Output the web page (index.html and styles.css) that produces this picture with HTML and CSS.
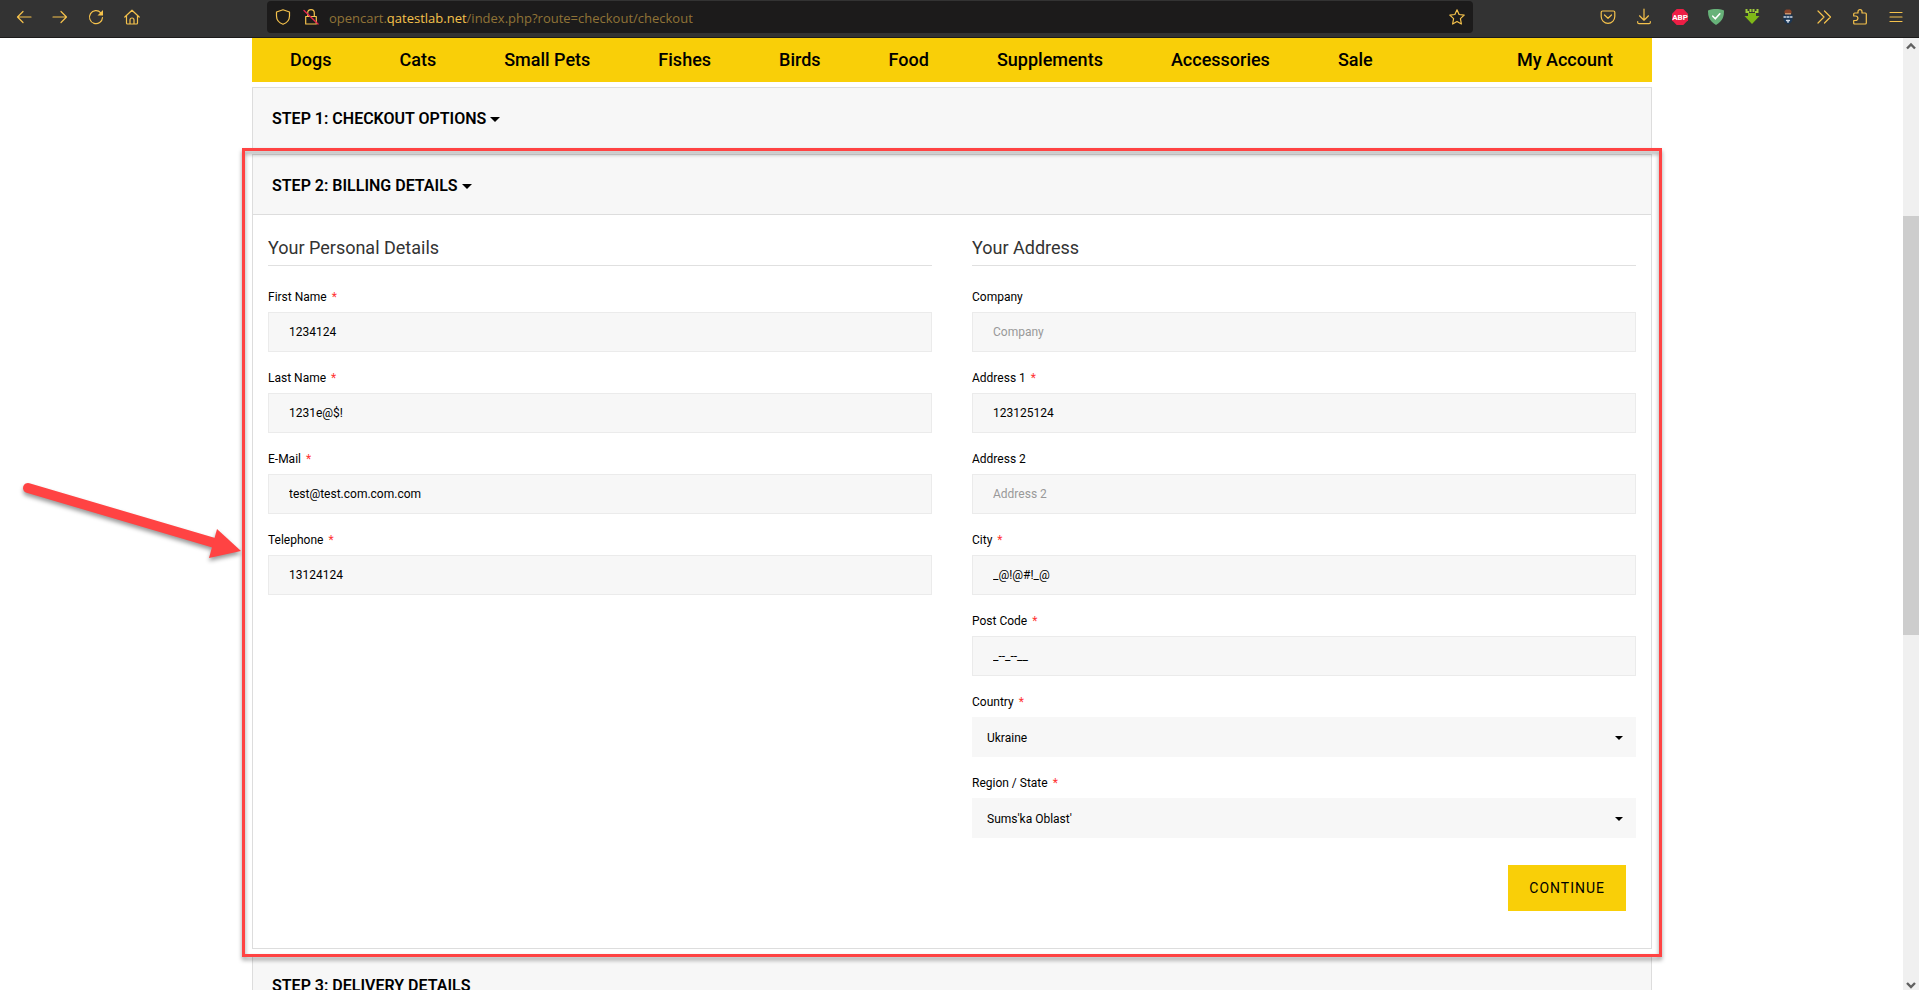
FILE: index.html
```html
<!DOCTYPE html>
<html lang="en">
<head>
<meta charset="utf-8">
<title>Checkout</title>
<link rel="stylesheet" href="styles.css">
</head>
<body>
<header class="toolbar">
  <div class="tools">
    <button class="tool" aria-label="Back"><svg class="icon" viewBox="0 0 16 16"><path d="M15 8H1.500M7 2.500 1.500 8 7 13.500"/></svg></button>
    <button class="tool" aria-label="Forward"><svg class="icon" viewBox="0 0 16 16"><path d="M1 8h13.500M9 2.500 14.500 8 9 13.500"/></svg></button>
    <button class="tool" aria-label="Reload"><svg class="icon" viewBox="0 0 16 16"><path d="M12.800 3.800A6.500 6.500 0 1 0 14.500 8.500"/><path class="solid" d="M15 1v5.500H9.500z"/></svg></button>
    <button class="tool" aria-label="Home"><svg class="icon" viewBox="0 0 16 16"><path d="M.8 8 8 1.200 15.200 8M2.500 6.500V14q0 1 1 1h9q1 0 1-1V6.500M6 15v-4a2 2 0 0 1 4 0v4"/></svg></button>
  </div>
  <div class="urlbar">
    <svg class="icon shield" viewBox="0 0 16 16"><path d="M8 .8 14.500 3v4c0 4-2.500 6.800-6.500 8.300C4 13.800 1.500 11 1.500 7V3z"/></svg>
    <svg class="icon" viewBox="0 0 16 16"><path d="M2.700 7.500h10.600v7.500H2.700zM4.700 7.500V4a3.300 3.300 0 0 1 6.600 0v3.500"/><path class="strike" d="m1 1.500 14 13.500"/></svg>
    <div class="url">opencart.<b class="host">qatestlab.net</b>/index.php?route=checkout/checkout</div>
    <svg class="icon" viewBox="0 0 16 16"><path d="m8 .8 2.100 4.700 5.100.6-3.800 3.500 1 5.400L8 12.400 3.600 15l1-5.400L.8 6.100l5.100-.6z"/></svg>
  </div>
  <div class="tools">
    <button class="tool" aria-label="Save to Pocket"><svg class="icon" viewBox="0 0 16 16"><path d="M2.500 2h11q1.300 0 1.300 1.300V7.500a6.800 6.800 0 0 1-13.600 0V3.300Q1.200 2 2.500 2zM4.500 6 8 9.300 11.500 6"/></svg></button>
    <button class="tool" aria-label="Downloads"><svg class="icon" viewBox="0 0 16 16"><path d="M8 0v11M3.500 6.800 8 11.200l4.500-4.400M1.700 12.500v1q0 1.200 1.200 1.200h10.200q1.200 0 1.200-1.200v-1"/></svg></button>
    <button class="tool" aria-label="Adblock Plus"><svg class="icon" viewBox="0 0 16 16"><path class="abp" d="M4.700 0h6.600L16 4.700v6.600L11.300 16H4.700L0 11.300V4.700z"/><text class="abp-text" x="8" y="11" text-anchor="middle">ABP</text></svg></button>
    <button class="tool" aria-label="AdGuard"><svg class="icon" viewBox="0 0 16 16"><path class="guard" d="M8 0c2.500 0 5.500.4 8 1.500 0 5-.5 10-8 14.500C.5 11.500 0 6.500 0 1.500 2.500.4 5.500 0 8 0z"/><path class="tick" d="m4.800 7.200 2.500 2.600 4.500-5"/></svg></button>
    <button class="tool" aria-label="Download helper"><svg class="icon" viewBox="0 0 16 16"><path class="grab" d="M4 4h8v3h3.500L8 15 .5 7H4z"/><path class="grab-top" d="M1.500 0h2v2H5v2H1.500zM5.500 0h2v3h-2zM8.500 0h2v3h-2zM12.500 0h2v4H11V2h1.500z"/></svg></button>
    <button class="tool" aria-label="VPN"><svg class="icon" viewBox="0 0 16 16"><path class="vpn-hat" d="M4.500 2 6 .5h4L11.500 2v2.500h-7z"/><path class="vpn-face" d="M5 4h6v2H5z"/><path class="vpn-body" d="M3.500 5.500h9v5q0 2.500-4.500 5-4.500-2.500-4.500-5z"/><path class="vpn-mark" d="M4 8h1.500M7 8h2M10.500 8H12M6.500 11.500h3M7.700 13h.6"/></svg></button>
    <button class="tool" aria-label="More tools"><svg class="icon" viewBox="0 0 16 16"><path d="m2 2 6 6-6 6M8.500 2l6 6-6 6"/></svg></button>
    <button class="tool" aria-label="Extensions"><svg class="icon" viewBox="0 0 16 16"><path d="M1.700 7V5q0-1 1-1h3.300V2.700a2 2 0 0 1 4 0V4h3.300q1 0 1 1v9q0 1-1 1H2.700q-1 0-1-1v-2.500h2a2 2 0 0 0 0-4.500z"/></svg></button>
    <button class="tool" aria-label="Menu"><svg class="icon" viewBox="0 0 16 16"><path d="M2 3.500h12M2 8h12M2 12.500h12"/></svg></button>
  </div>
</header>
<div class="viewport">
  <main class="page">
    <div class="container">
      <nav class="menu">
        <a href="#">Dogs</a><a href="#">Cats</a><a href="#">Small Pets</a><a href="#">Fishes</a><a href="#">Birds</a><a href="#">Food</a><a href="#">Supplements</a><a href="#">Accessories</a><a href="#">Sale</a><a class="account" href="#">My Account</a>
      </nav>
      <div class="steps">
        <section class="panel">
          <h4 class="panel-head"><a href="#">STEP 1: CHECKOUT OPTIONS <span class="caret"></span></a></h4>
        </section>
        <section class="panel">
          <h4 class="panel-head open"><a href="#">STEP 2: BILLING DETAILS <span class="caret"></span></a></h4>
          <form class="panel-body">
            <div class="columns">
              <div class="column">
                <h2 class="legend">Your Personal Details</h2>
                <div class="field"><label for="first">First Name<span class="req">*</span></label><input id="first" type="text" value="1234124"></div>
                <div class="field"><label for="last">Last Name<span class="req">*</span></label><input id="last" type="text" value="1231e@$!"></div>
                <div class="field"><label for="email">E-Mail<span class="req">*</span></label><input id="email" type="text" value="test@test.com.com.com"></div>
                <div class="field"><label for="phone">Telephone<span class="req">*</span></label><input id="phone" type="text" value="13124124"></div>
              </div>
              <div class="column">
                <h2 class="legend">Your Address</h2>
                <div class="field"><label for="company">Company</label><input id="company" type="text" placeholder="Company"></div>
                <div class="field"><label for="addr1">Address 1<span class="req">*</span></label><input id="addr1" type="text" value="123125124"></div>
                <div class="field"><label for="addr2">Address 2</label><input id="addr2" type="text" placeholder="Address 2"></div>
                <div class="field"><label for="city">City<span class="req">*</span></label><input id="city" type="text" value="_@!@#!_@"></div>
                <div class="field"><label for="post">Post Code<span class="req">*</span></label><input id="post" type="text" value="_--_--__"></div>
                <div class="field"><label for="country">Country<span class="req">*</span></label><div class="select"><select id="country"><option>Ukraine</option></select><span class="caret small"></span></div></div>
                <div class="field"><label for="region">Region / State<span class="req">*</span></label><div class="select"><select id="region"><option>Sums'ka Oblast'</option></select><span class="caret small"></span></div></div>
              </div>
            </div>
            <div class="actions"><button class="continue" type="button">CONTINUE</button></div>
          </form>
          <div class="highlight">
            <svg class="arrow" viewBox="0 0 233 90"><path class="shaft" d="M16 18 206 74"/><path class="head" d="m229 81-24-22-8 29z"/></svg>
          </div>
        </section>
        <section class="panel">
          <h4 class="panel-head"><a href="#">STEP 3: DELIVERY DETAILS</a></h4>
        </section>
      </div>
    </div>
  </main>
  <div class="scrollbar">
    <svg class="chevron" viewBox="0 0 16 17"><path d="m4 10.500 4-4 4 4"/></svg>
    <div class="gap-above"></div>
    <div class="thumb"></div>
    <div class="gap-below"></div>
    <svg class="chevron" viewBox="0 0 16 17"><path d="m4 10 4 4 4-4"/></svg>
  </div>
</div>
</body>
</html>
```
FILE: styles.css
```css
* { box-sizing: border-box; }
body {
  margin: 0;
  height: 100vh;
  display: flex;
  flex-direction: column;
  overflow: hidden;
  background: #fff;
  color: #000;
  font-family: Roboto, "Liberation Sans", sans-serif;
  font-size: 12px;
}
a { color: inherit; text-decoration: none; }
button, input, select { font: inherit; color: inherit; }

/* Browser toolbar */
.toolbar {
  flex: none;
  display: flex;
  align-items: flex-start;
  height: 38px;
  padding: 1px 5px 0 6px;
  background: #333;
  border-bottom: 1px solid #1c1b1b;
}
.tools { display: flex; }
.tool {
  display: flex;
  align-items: center;
  justify-content: center;
  width: 36px;
  height: 32px;
  padding: 0;
  border: 0;
  background: none;
}
.icon {
  flex: none;
  width: 16px;
  height: 16px;
  fill: none;
  stroke: #f5c24c;
  stroke-width: 1.2;
  stroke-linejoin: round;
  stroke-linecap: round;
  overflow: visible;
}
.icon .solid { fill: #f5c24c; stroke: none; }
.icon .strike { stroke: #e22850; stroke-width: 1.4; }
.icon .abp { fill: #ed1e45; stroke: none; }
.icon .abp-text { fill: #fff; stroke: none; font: bold 8px Roboto, sans-serif; }
.icon .guard { fill: #67b279; stroke: none; }
.icon .tick { stroke: #fff; stroke-width: 1.6; }
.icon .grab { fill: #7fb818; stroke: none; }
.icon .grab-top { fill: #9fcb3c; stroke: none; }
.icon .vpn-hat { fill: #8a452a; stroke: none; }
.icon .vpn-face { fill: #c9936c; stroke: none; }
.icon .vpn-body { fill: #1b3654; stroke: none; }
.icon .vpn-mark { stroke: #d5dde8; stroke-width: 1.3; }
.urlbar {
  flex: 1;
  display: flex;
  align-items: center;
  height: 32px;
  margin: 0 117px;
  padding: 0 8px;
  border-radius: 4px;
  background: #1c1b1b;
}
.shield { margin-right: 12px; }
.url {
  flex: 1;
  margin-left: 10px;
  padding-top: 2px;
  color: #907337;
  font-family: "Open Sans", "Noto Sans", sans-serif;
  font-size: 13px;
}
.host { color: #f5c24c; font-weight: 400; }

/* Page */
.viewport { flex: 1; min-height: 0; display: flex; }
.page { flex: 1; min-width: 0; overflow: hidden; padding-left: 1px; }
.container { max-width: 1400px; margin: 0 auto; }
.menu {
  display: flex;
  gap: 68px;
  padding: 0 39px 0 38px;
  background: #f9cf08;
  font-size: 18px;
  font-weight: 500;
  line-height: 44px;
}
.account { margin-left: auto; }
.steps { display: flex; flex-direction: column; gap: 5px; margin-top: 5px; }
.panel { position: relative; border: 1px solid #ddd; background: #fff; }
.panel-head {
  height: 60px;
  margin: 0;
  padding: 1px 19px 0;
  background: #f7f7f7;
  font-size: 16px;
  font-weight: 600;
  line-height: 60px;
}
.open { border-bottom: 1px solid #ddd; }
.caret {
  display: inline-block;
  border: 5px solid transparent;
  border-top-color: #000;
  border-bottom: 0;
  vertical-align: middle;
}
.small { border-width: 4px; border-bottom: 0; }
.panel-body { padding: 15px 15px 37px; }
.columns { display: grid; grid-template-columns: 1fr 1fr; gap: 40px; }
.column { display: flex; flex-direction: column; gap: 16px; }
.legend {
  margin: 0 0 5px;
  border-bottom: 1px solid #e0e0e0;
  color: #333;
  font-size: 18px;
  font-weight: 400;
  line-height: 35px;
}
.field { display: flex; flex-direction: column; gap: 5px; }
.field label { line-height: 20px; }
.req { margin-left: 5px; color: #f33; }
.field input {
  width: 100%;
  height: 40px;
  padding: 0 20px;
  border: 1px solid #ebebeb;
  border-radius: 0;
  background: #f7f7f7;
}
.field input::placeholder { color: #999; opacity: 1; }
.select { display: grid; align-items: center; background: #f7f7f7; }
.select select {
  grid-area: 1 / 1;
  width: 100%;
  height: 40px;
  padding: 2px 15px 0;
  border: 0;
  appearance: none;
  background: none;
}
.select .caret { grid-area: 1 / 1; justify-self: end; margin: 1px 13px 0 0; pointer-events: none; }
.actions { display: flex; justify-content: flex-end; padding: 27px 10px 0 0; }
.continue {
  height: 46px;
  padding: 0 21px;
  border: 0;
  background: #f9cf08;
  font-size: 14px;
  letter-spacing: 1px;
}

/* Annotation over the billing step */
.highlight {
  position: absolute;
  z-index: 1;
  inset: -7px -11px -9px -11px;
  border: 3px solid #ff4343;
  filter: drop-shadow(0 3px 2px rgba(0, 0, 0, .4));
  pointer-events: none;
}
.arrow { position: absolute; right: 100%; top: 319px; width: 233px; height: 90px; }
.shaft { fill: none; stroke: #ff4343; stroke-width: 10; stroke-linecap: round; }
.head { fill: #ff4343; }

/* Scrollbar */
.scrollbar { flex: none; display: flex; flex-direction: column; width: 16px; background: #f0f0f0; }
.chevron { flex: none; width: 16px; height: 17px; fill: none; stroke: #606060; stroke-width: 2.4; }
.gap-above { flex: 161; }
.thumb { flex: 419; background: #cdcdcd; }
.gap-below { flex: 338; }
```
